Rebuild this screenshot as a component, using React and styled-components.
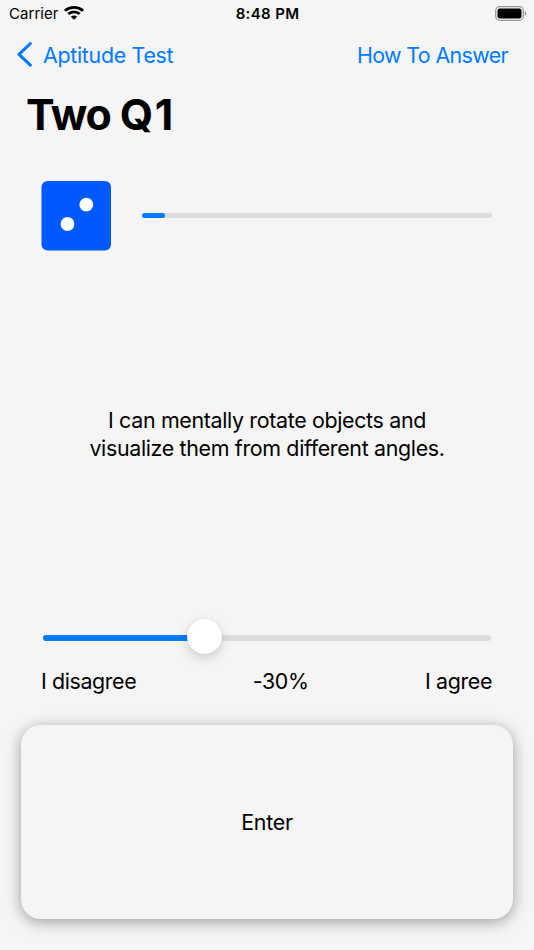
import React from 'react';
import styled, { createGlobalStyle } from 'styled-components';

const GlobalStyle = createGlobalStyle`
* {
  box-sizing: border-box;
}
body {
  margin: 0;
  background-color: #f5f5f5;
  font-family: Inter, "Liberation Sans", sans-serif;
  color: #000;
}
`;

const Screen = styled.div`
width: 534px;
height: 950px;
display: flex;
flex-direction: column;
background-color: #f5f5f5;
overflow: hidden;
`;

//carrier, clock and battery
const StatusBar = styled.div`
height: 28px;
padding: 0 7px 0 9px;
display: grid;
grid-template-columns: 1fr auto 1fr;
align-items: center;
font-size: 15px;
line-height: 28px;
`;

const Carrier = styled.div`
display: flex;
align-items: center;
gap: 6px;
letter-spacing: 0.05px;

svg {
  margin: 0 0 2px -1px;
}
`;

const Clock = styled.div`
padding-right: 1px;
font-weight: 600;
letter-spacing: 0.35px;
`;

const Battery = styled.svg`
justify-self: end;
margin-bottom: 2px;
`;

const NavBar = styled.div`
height: 54px;
padding: 0 26px 0 16px;
display: flex;
align-items: center;
justify-content: space-between;
`;

const NavButton = styled.button`
display: flex;
align-items: center;
gap: 10px;
padding: 0;
border: none;
background: none;
font-family: inherit;
font-size: 21.4px;
line-height: 28px;
letter-spacing: ${props => props.$spacing};
color: #007aff;
cursor: pointer;
`;

const Title = styled.h1`
margin: 0;
height: 99px;
padding: 6px 0 0 26px;
font-size: 43px;
line-height: 52px;
font-weight: 700;
letter-spacing: -1.2px;

span {
  letter-spacing: 1.5px;
}
`;

//the die and how far the test has come
const Progress = styled.div`
height: 70px;
padding: 0 42px 0 41px;
display: flex;
align-items: center;
gap: 31px;
`;

const Track = styled.div`
flex: 1;
height: ${props => props.$height};
margin: ${props => props.$margin};
border-radius: 3px;
background-color: #dcdcdd;
`;

const Fill = styled.div`
width: ${props => props.$width};
height: 100%;
border-radius: 3px;
background-color: #007aff;
`;

const Question = styled.p`
margin: 0;
height: 368px;
padding-bottom: 2px;
display: flex;
align-items: center;
justify-content: center;
text-align: center;
font-size: 21.4px;
line-height: 28px;
letter-spacing: -0.33px;
`;

const Slider = styled.div`
height: 35px;
margin: 0 43px;
display: flex;
align-items: center;
position: relative;
`;

const Knob = styled.div`
position: absolute;
left: 144px;
top: 0;
width: 35px;
height: 35px;
border-radius: 50%;
background-color: #fff;
box-shadow: 0 4px 12px rgba(0,0,0,0.16), 0 0 2px rgba(0,0,0,0.08);
`;

const Labels = styled.div`
height: 71px;
padding: 13px 42px 0 41px;
display: flex;
justify-content: space-between;
font-size: 21.4px;
line-height: 28px;
letter-spacing: -0.38px;
`;

const EnterButton = styled.button`
height: 194px;
margin: 0 21px;
padding: 0;
border: none;
border-radius: 20px;
background-color: #f5f5f5;
box-shadow: 0 3px 15px rgba(0,0,0,0.36);
font-family: inherit;
font-size: 21.4px;
letter-spacing: -0.25px;
color: #000;
cursor: pointer;
`;

const WifiIcon = () => (
  <svg width="20" height="14" viewBox="0 0 20 15" preserveAspectRatio="none" fill="none" stroke="#000">
    <path d="M1 5.2a12.9 12.9 0 0 1 18 0" strokeWidth="3" />
    <path d="M4.3 8.6a8.2 8.2 0 0 1 11.4 0" strokeWidth="2.8" />
    <path d="M10 14.8l-3.2-3.2a4.6 4.6 0 0 1 6.4 0z" fill="#000" stroke="none" />
  </svg>
);

const BatteryIcon = () => (
  <Battery width="32" height="15" viewBox="0 0 32 15">
    <rect x="0.7" y="0.7" width="27.6" height="13.6" rx="4" fill="none" stroke="#999" strokeWidth="1.3" />
    <rect x="2.5" y="2.5" width="24" height="10" rx="2.3" fill="#000" />
    <path d="M29.8 5.2c2 .7 2 3.9 0 4.6z" fill="#999" />
  </Battery>
);

const BackIcon = () => (
  <svg width="17" height="26" viewBox="0 0 17 26" fill="none" stroke="#007aff" strokeWidth="3" strokeLinecap="round" strokeLinejoin="round">
    <path d="M14.3 1.6L3 12.4l11.3 10.8" />
  </svg>
);

const Die = () => (
  <svg width="70" height="70" viewBox="0 0 70 70">
    <rect x="0.5" y="0" width="69.5" height="69.5" rx="6" fill="#0059ff" />
    <circle cx="45.3" cy="23.7" r="6.9" fill="#fff" />
    <circle cx="26.5" cy="43" r="6.9" fill="#fff" />
  </svg>
);

const App = () => {
  return (
    <>
      <GlobalStyle/>
      <Screen>
        <StatusBar>
          <Carrier>Carrier <WifiIcon/></Carrier>
          <Clock>8:48 PM</Clock>
          <BatteryIcon/>
        </StatusBar>
        <NavBar>
          <NavButton $spacing="-0.3px"><BackIcon/>Aptitude Test</NavButton>
          <NavButton $spacing="-0.62px">How To Answer</NavButton>
        </NavBar>
        <Title>Two <span>Q1</span></Title>
        <Progress>
          <Die/>
          <Track $height="5px" $margin="0 0 2px"><Fill $width="23px"/></Track>
        </Progress>
        <Question>
          I can mentally rotate objects and<br/>
          visualize them from different angles.
        </Question>
        <Slider>
          <Track $height="6px" $margin="3px 0 0"><Fill $width="160px"/></Track>
          <Knob/>
        </Slider>
        <Labels>
          <span>I disagree</span>
          <span>-30%</span>
          <span>I agree</span>
        </Labels>
        <EnterButton>Enter</EnterButton>
      </Screen>
    </>
  )
}

export default App
